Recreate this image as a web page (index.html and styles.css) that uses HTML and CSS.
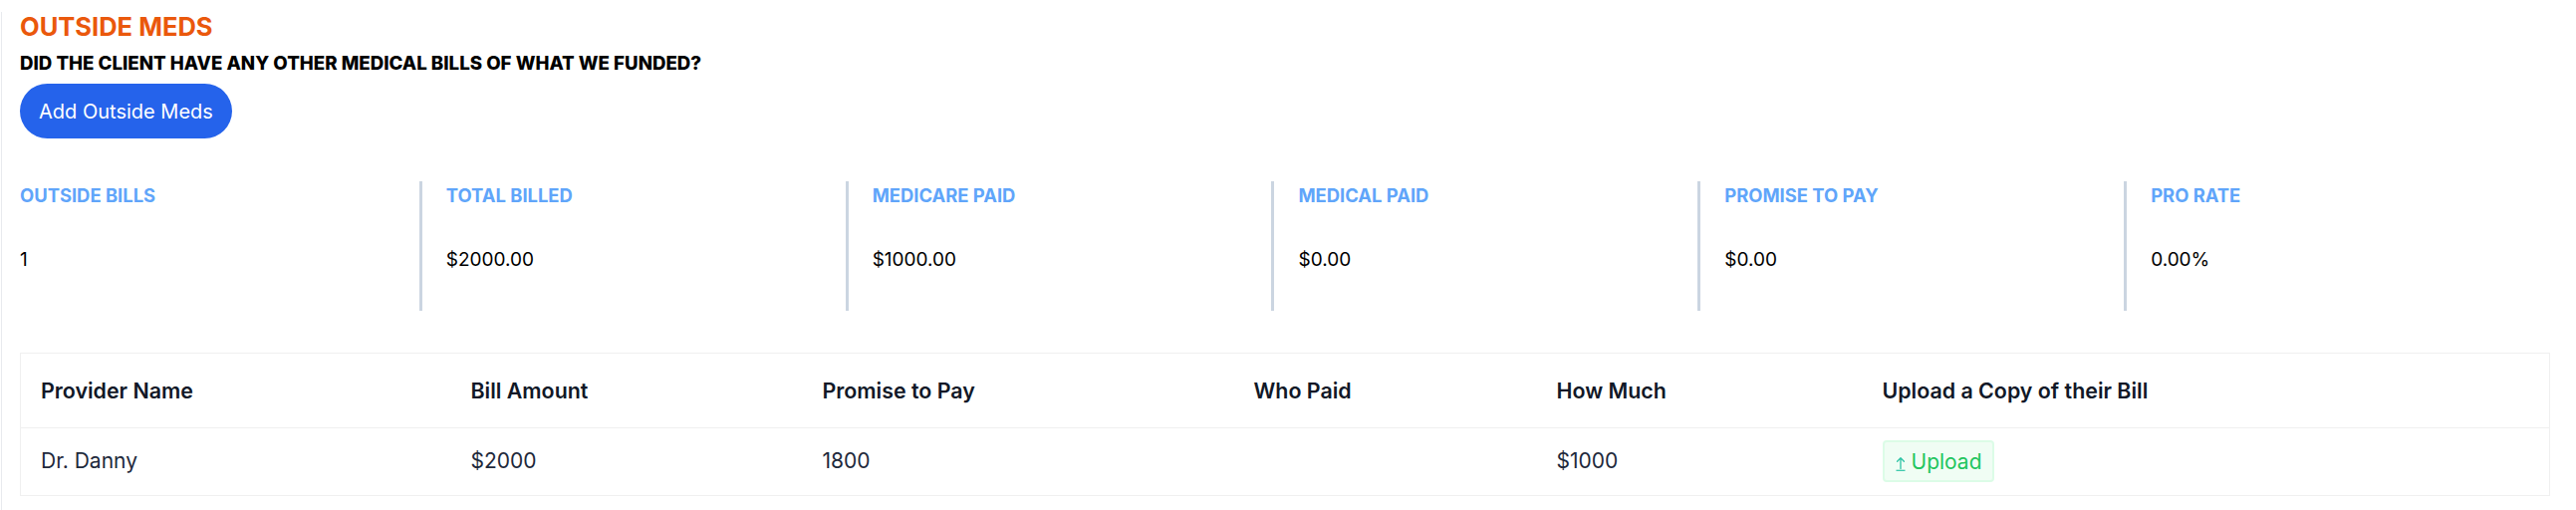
FILE: index.html
```html
<!DOCTYPE html>
<html lang="en">
<head>
<meta charset="utf-8">
<title>Outside Meds</title>
<link rel="stylesheet" href="styles.css">
</head>
<body>
<div class="page">
  <h1 class="title">OUTSIDE MEDS</h1>
  <h2 class="question">DID THE CLIENT HAVE ANY OTHER MEDICAL BILLS OF WHAT WE FUNDED?</h2>
  <button class="add-btn" type="button">Add Outside Meds</button>

  <div class="stats">
    <div class="stat"><div class="stat-label">OUTSIDE BILLS</div><div class="stat-value">1</div></div>
    <div class="stat"><div class="stat-label">TOTAL BILLED</div><div class="stat-value">$2000.00</div></div>
    <div class="stat"><div class="stat-label">MEDICARE PAID</div><div class="stat-value">$1000.00</div></div>
    <div class="stat"><div class="stat-label">MEDICAL PAID</div><div class="stat-value">$0.00</div></div>
    <div class="stat"><div class="stat-label">PROMISE TO PAY</div><div class="stat-value">$0.00</div></div>
    <div class="stat"><div class="stat-label">PRO RATE</div><div class="stat-value">0.00%</div></div>
  </div>

  <table class="bills">
    <colgroup>
      <col class="col-provider">
      <col class="col-amount">
      <col class="col-promise">
      <col class="col-who">
      <col class="col-much">
      <col class="col-upload">
    </colgroup>
    <thead>
      <tr>
        <th>Provider Name</th>
        <th>Bill Amount</th>
        <th>Promise to Pay</th>
        <th>Who Paid</th>
        <th>How Much</th>
        <th>Upload a Copy of their Bill</th>
      </tr>
    </thead>
    <tbody>
      <tr>
        <td>Dr. Danny</td>
        <td>$2000</td>
        <td>1800</td>
        <td></td>
        <td>$1000</td>
        <td class="upload-cell">
          <span class="upload">
            <svg class="upload-icon" width="10" height="16" viewBox="0 0 10 16" aria-hidden="true">
              <path d="M5 13.5V3 M1.6 6.2L5 2.8l3.4 3.4" fill="none" stroke="#2cc3a5" stroke-width="1.3" stroke-linecap="round" stroke-linejoin="round"/>
              <path d="M0.5 15.3H9.5" fill="none" stroke="#2cc3a5" stroke-width="1.2"/>
            </svg>
            <span>Upload</span>
          </span>
        </td>
      </tr>
    </tbody>
  </table>
</div>
</body>
</html>
```

FILE: styles.css
```css
* {
  box-sizing: border-box;
}

html, body {
  margin: 0;
  padding: 0;
  background: #ffffff;
}

body {
  font-family: Inter, "Liberation Sans", sans-serif;
  color: #000000;
}

.page {
  margin-left: 1px;
  border-left: 1px solid #e8eaee;
  min-height: 100vh;
  padding: 0 26px 0 18px;
}

.title {
  margin: 12px 0 0;
  font-size: 25.5px;
  line-height: 1.2;
  font-weight: 700;
  color: #ea580c;
}

.question {
  margin: 10px 0 0;
  font-size: 18.7px;
  line-height: 1.15;
  font-weight: 800;
  color: #000000;
}

.add-btn {
  display: flex;
  align-items: center;
  width: max-content;
  height: 55px;
  margin-top: 10px;
  padding: 0 19px;
  border: none;
  border-radius: 9999px;
  background: #2563eb;
  color: #ffffff;
  font-family: inherit;
  font-size: 20px;
  line-height: 1;
  font-weight: 400;
}

.stats {
  display: flex;
  margin-top: 43px;
}

.stat {
  flex: 1 1 0;
  min-width: 0;
  padding: 3px 24px 39px;
  border-left: 3px solid #cbd5e1;
}

.stat:first-child {
  padding-left: 0;
  border-left: none;
}

.stat-label {
  font-size: 18.4px;
  line-height: 1.2;
  font-weight: 700;
  color: #60a5fa;
}

.stat-value {
  margin-top: 42px;
  font-size: 19px;
  line-height: 24px;
  color: #000000;
}

.bills {
  width: 100%;
  margin-top: 42px;
  border-collapse: collapse;
  table-layout: fixed;
  border: 1px solid #f0f0f0;
}

.col-provider { width: 432px; }
.col-amount { width: 353px; }
.col-promise { width: 433px; }
.col-who { width: 304px; }
.col-much { width: 327px; }
.col-upload { width: 690px; }

.bills th {
  text-align: left;
  padding: 21px 20px;
  font-size: 21.4px;
  line-height: 32px;
  font-weight: 600;
  color: #111827;
  border-bottom: 1px solid #f0f0f0;
}

.bills td {
  padding: 12px 20px 13px;
  font-size: 21px;
  line-height: 30px;
  font-weight: 400;
  color: #1e293b;
  vertical-align: middle;
}

.upload {
  display: inline-flex;
  align-items: center;
  gap: 6px;
  height: 42px;
  padding: 0 10px 0 11px;
  border: 2px solid #dcfce7;
  border-radius: 4px;
  background: #f0fdf4;
  color: #22c55e;
  font-size: 21px;
  line-height: 1;
  vertical-align: top;
}

.upload-icon {
  display: block;
  margin-top: 4px;
}
```
